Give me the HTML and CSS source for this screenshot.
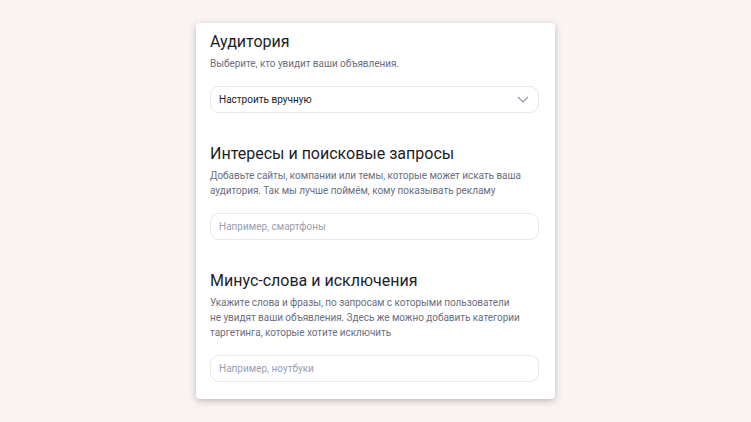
FILE: index.html
```html
<!DOCTYPE html>
<html lang="ru">
<head>
<meta charset="utf-8">
<link rel="stylesheet" href="styles.css">
</head>
<body>
<div class="card">
  <section class="sec">
    <h2 class="title">Аудитория</h2>
    <p class="desc">Выберите, кто увидит ваши объявления.</p>
    <div class="field select">
      <span class="value">Настроить вручную</span>
      <svg class="chev" width="12" height="7" viewBox="0 0 12 7"><path d="M1 1l5 5 5-5" fill="none" stroke="#8b90a0" stroke-width="1.1"/></svg>
    </div>
  </section>
  <section class="sec">
    <h2 class="title">Интересы и поисковые запросы</h2>
    <p class="desc">Добавьте сайты, компании или темы, которые может искать ваша<br>аудитория. Так мы лучше поймём, кому показывать рекламу</p>
    <div class="field"><span class="ph">Например, смартфоны</span></div>
  </section>
  <section class="sec">
    <h2 class="title">Минус-слова и исключения</h2>
    <p class="desc">Укажите слова и фразы, по запросам с которыми пользователи<br>не увидят ваши объявления. Здесь же можно добавить категории<br>таргетинга, которые хотите исключить</p>
    <div class="field"><span class="ph">Например, ноутбуки</span></div>
  </section>
</div>
</body>
</html>
```
FILE: styles.css
```css
html, body { margin: 0; padding: 0; }
body {
  background: #f9f4f3;
  font-family: Roboto, "Noto Sans", sans-serif;
  width: 751px;
  height: 422px;
  overflow: hidden;
}
.card {
  box-sizing: border-box;
  width: 359px;
  margin: 23px auto 0;
  background: #fff;
  border-radius: 4px;
  box-shadow: 0 2px 7px rgba(60, 40, 40, 0.3);
  padding: 8px 16px 17px 14px;
}
.sec + .sec { margin-top: 30px; }
.title {
  margin: 0;
  font-size: 16px;
  font-weight: 400;
  line-height: 22px;
  color: #1b1e27;
}
.desc {
  margin: 3px 0 0;
  font-size: 10px;
  letter-spacing: -0.05px;
  line-height: 15px;
  color: #6b6f80;
  white-space: nowrap;
}
.field {
  box-sizing: border-box;
  margin-top: 15px;
  height: 27px;
  border: 1px solid #e7e7ec;
  border-radius: 9px;
  display: flex;
  align-items: center;
  justify-content: space-between;
  padding: 0 9px 0 8px;
  font-size: 10px;
}
.value { color: #1b1e27; }
.ph { color: #9a9eae; }
.chev { display: block; }
```
